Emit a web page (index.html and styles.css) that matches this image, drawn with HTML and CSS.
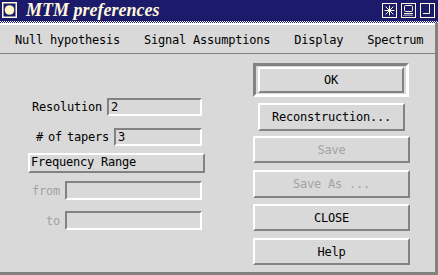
FILE: index.html
```html
<!DOCTYPE html>
<html>
<head>
<meta charset="utf-8">
<link rel="stylesheet" href="styles.css">
</head>
<body>
<div class="window">
  <div class="titlebar">
    <svg class="ticon" width="15" height="16" viewBox="0 0 15 16">
      <rect x="0.75" y="0.75" width="13.5" height="14.5" fill="none" stroke="#fff8dc" stroke-width="1.5"/>
      <circle cx="7.5" cy="8" r="4.8" fill="#fff5c8"/>
    </svg>
    <span class="title">MTM preferences</span>
    <div class="tbtns">
      <svg width="15" height="15" viewBox="0 0 15 15">
        <rect x="0.5" y="0.5" width="14" height="14" fill="none" stroke="#fff8dc"/>
        <path d="M7.5 2.5V12.5M2.5 7.5H12.5M3.5 3.5L11.5 11.5M11.5 3.5L3.5 11.5" stroke="#fff8dc" stroke-width="1"/>
      </svg>
      <svg width="15" height="15" viewBox="0 0 15 15">
        <rect x="0.5" y="0.5" width="14" height="14" fill="none" stroke="#fff8dc"/>
        <rect x="3.5" y="2.5" width="8" height="6" rx="1" fill="none" stroke="#fff8dc"/>
        <path d="M2.5 12.5H12.5M3.5 11H11.5" stroke="#fff8dc" stroke-width="1" stroke-dasharray="1 1"/>
        <path d="M3 10.5H12" stroke="#fff8dc" stroke-width="1"/>
      </svg>
      <svg width="15" height="15" viewBox="0 0 15 15">
        <rect x="0.5" y="0.5" width="14" height="14" fill="none" stroke="#fff8dc"/>
        <path d="M9.5 1V10.5H3" fill="none" stroke="#fff8dc" stroke-width="1"/>
      </svg>
    </div>
  </div>
  <div class="checker"></div>
  <div class="frame">
    <div class="menubar">
      <span>Null hypothesis</span>
      <span>Signal Assumptions</span>
      <span>Display</span>
      <span>Spectrum</span>
    </div>
    <div class="content">
      <div class="left">
        <div class="row row-res">
          <span class="label lab-res">Resolution</span>
          <span class="entry entry-res">2</span>
        </div>
        <div class="row row-tap">
          <span class="label lab-tap"># of tapers</span>
          <span class="entry entry-tap">3</span>
        </div>
        <div class="freqbtn">Frequency Range</div>
        <div class="row row-from">
          <span class="label lab-range disabled">from</span>
          <span class="entry entry-range"></span>
        </div>
        <div class="row row-to">
          <span class="label lab-range disabled">to</span>
          <span class="entry entry-range"></span>
        </div>
      </div>
      <div class="right">
        <div class="defring"><div class="btn btn-ok">OK</div></div>
        <div class="btn btn-recon">Reconstruction...</div>
        <div class="btn btn-wide btn-save disabled">Save</div>
        <div class="btn btn-wide btn-saveas disabled">Save As ...</div>
        <div class="btn btn-wide btn-close">CLOSE</div>
        <div class="btn btn-wide btn-help">Help</div>
      </div>
    </div>
  </div>
</div>
</body>
</html>
```

FILE: styles.css
```css
html, body {
  margin: 0;
  padding: 0;
  background: #d9d9d9;
}
.window {
  width: 438px;
  height: 275px;
  overflow: hidden;
  font-family: "DejaVu Sans Mono", "Liberation Mono", monospace;
  font-size: 12px;
  letter-spacing: -0.22px;
  color: #000;
}
.titlebar {
  height: 21px;
  background: #1b1a6b;
  display: flex;
  align-items: flex-start;
}
.ticon {
  margin: 2px 0 0 2px;
  display: block;
}
.title {
  font-family: "Liberation Serif", "Times New Roman", serif;
  font-weight: bold;
  font-style: italic;
  font-size: 18px;
  letter-spacing: 0;
  color: #fff8dc;
  margin-left: 9px;
  line-height: 20px;
}
.tbtns {
  margin-left: auto;
  margin-right: 3px;
  margin-top: 3px;
  display: flex;
  gap: 4px;
}
.tbtns svg {
  display: block;
}
.checker {
  height: 2px;
  background: repeating-conic-gradient(#1b1a6b 0 25%, #ffffff 0 50%) 0 0 / 2px 2px;
}
.frame {
  height: 252px;
  border-right: 3px solid #828282;
  border-bottom: 3px solid #828282;
  box-sizing: border-box;
  display: flex;
  flex-direction: column;
}
.menubar {
  border-top: 2px solid #ffffff;
  border-bottom: 1px solid #828282;
  height: 27px;
  display: flex;
  align-items: center;
  gap: 24px;
  padding-left: 15px;
  padding-top: 1px;
  box-sizing: content-box;
}
.menubar span {
  white-space: pre;
  line-height: 14px;
}
.content {
  flex: 1;
  display: flex;
}
.left {
  width: 253px;
  padding-left: 28px;
  box-sizing: border-box;
  display: flex;
  flex-direction: column;
}
.row {
  display: flex;
  align-items: center;
}
.label {
  white-space: pre;
  line-height: 14px;
}
.disabled {
  color: #a3a3a3;
}
.entry {
  display: block;
  box-sizing: border-box;
  border: 2px solid;
  border-color: #828282 #ffffff #ffffff #828282;
  padding-left: 2px;
  line-height: 14px;
}
.row-res { margin-top: 44px; }
.lab-res { margin-left: 4px; width: 70px; margin-right: 5px; }
.entry-res { width: 95px; height: 18px; }
.row-tap { margin-top: 12px; }
.lab-tap { margin-left: 8px; width: 73px; margin-right: 5px; word-spacing: -2px; }
.entry-tap { width: 88px; height: 18px; }
.freqbtn {
  margin-top: 7px;
  width: 177px;
  height: 20px;
  box-sizing: border-box;
  border: 2px solid;
  border-color: #ffffff #828282 #828282 #ffffff;
  padding-left: 1px;
  line-height: 15px;
  white-space: pre;
}
.row-from { margin-top: 8px; }
.row-to { margin-top: 11px; }
.lab-range { width: 32px; text-align: right; margin-right: 5px; }
.entry-range { width: 137px; height: 19px; }
.right {
  display: flex;
  flex-direction: column;
  align-items: flex-start;
}
.btn {
  box-sizing: border-box;
  border: 2px solid;
  border-color: #ffffff #828282 #828282 #ffffff;
  display: flex;
  align-items: center;
  justify-content: center;
  white-space: pre;
  line-height: 14px;
}
.defring {
  margin-top: 9px;
  border: 3px solid;
  border-color: #828282 #ffffff #ffffff #828282;
  padding: 1px 2px;
}
.btn-ok { width: 146px; height: 26px; }
.btn-recon { margin-top: 6px; margin-left: 5px; width: 147px; height: 28px; }
.btn-wide { width: 157px; height: 27px; }
.btn-save { margin-top: 5px; }
.btn-saveas { margin-top: 7px; height: 28px; }
.btn-close { margin-top: 6px; }
.btn-help { margin-top: 7px; }
```
